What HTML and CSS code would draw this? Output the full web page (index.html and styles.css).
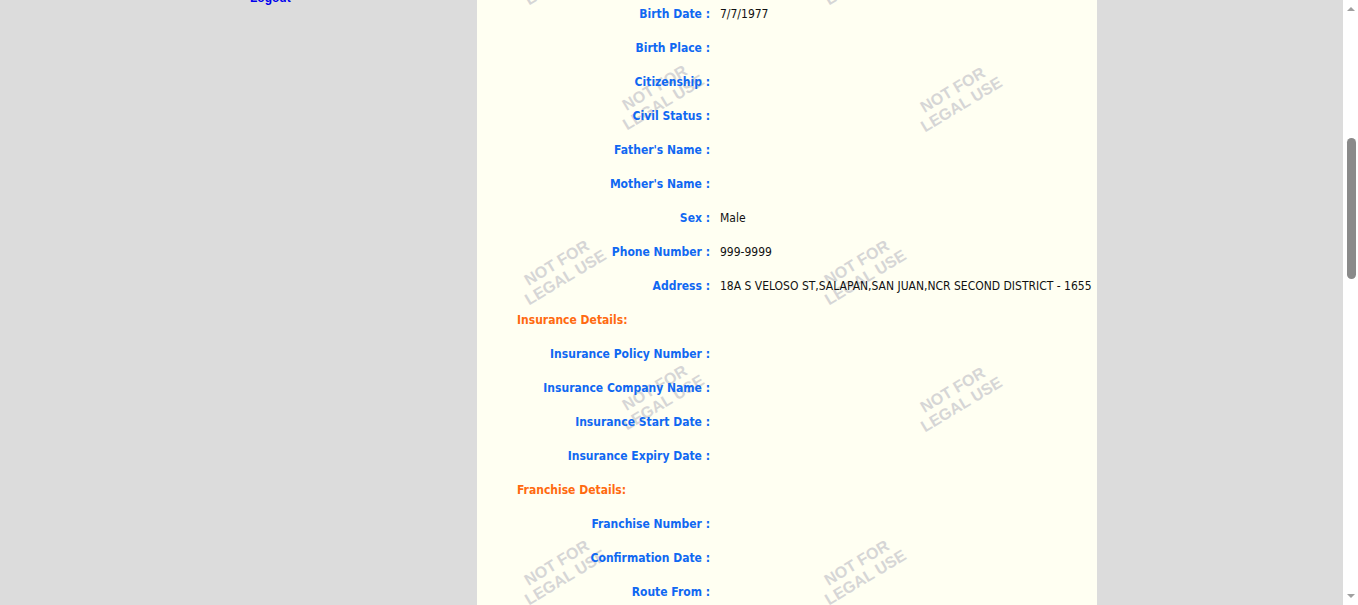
FILE: index.html
```html
<!DOCTYPE html>
<html>
<head>
<meta charset="utf-8">
<title>Details</title>
<link rel="stylesheet" href="styles.css">
</head>
<body>
<div class="page">
  <div class="side">
    <a class="logout" href="#">Logout</a>
  </div>
  <div class="panel">
    <div class="marks">
      <div class="mark" style="left:84px;top:-30px">NOT FOR<br>LEGAL USE</div>
      <div class="mark" style="left:384px;top:-30px">NOT FOR<br>LEGAL USE</div>
      <div class="mark" style="left:182px;top:95px">NOT FOR<br>LEGAL USE</div>
      <div class="mark" style="left:480px;top:97px">NOT FOR<br>LEGAL USE</div>
      <div class="mark" style="left:84px;top:270px">NOT FOR<br>LEGAL USE</div>
      <div class="mark" style="left:384px;top:270px">NOT FOR<br>LEGAL USE</div>
      <div class="mark" style="left:182px;top:395px">NOT FOR<br>LEGAL USE</div>
      <div class="mark" style="left:480px;top:397px">NOT FOR<br>LEGAL USE</div>
      <div class="mark" style="left:84px;top:570px">NOT FOR<br>LEGAL USE</div>
      <div class="mark" style="left:384px;top:570px">NOT FOR<br>LEGAL USE</div>
    </div>
    <div class="details">
      <div class="lbl">Birth Date :</div><div class="val">7/7/1977</div>
      <div class="lbl">Birth Place :</div><div class="val"></div>
      <div class="lbl">Citizenship :</div><div class="val"></div>
      <div class="lbl">Civil Status :</div><div class="val"></div>
      <div class="lbl">Father's Name :</div><div class="val"></div>
      <div class="lbl">Mother's Name :</div><div class="val"></div>
      <div class="lbl">Sex :</div><div class="val">Male</div>
      <div class="lbl">Phone Number :</div><div class="val">999-9999</div>
      <div class="lbl">Address :</div><div class="val">18A S VELOSO ST,SALAPAN,SAN JUAN,NCR SECOND DISTRICT - 1655</div>
      <div class="section">Insurance Details:</div>
      <div class="lbl">Insurance Policy Number :</div><div class="val"></div>
      <div class="lbl">Insurance Company Name :</div><div class="val"></div>
      <div class="lbl">Insurance Start Date :</div><div class="val"></div>
      <div class="lbl">Insurance Expiry Date :</div><div class="val"></div>
      <div class="section">Franchise Details:</div>
      <div class="lbl">Franchise Number :</div><div class="val"></div>
      <div class="lbl">Confirmation Date :</div><div class="val"></div>
      <div class="lbl">Route From :</div><div class="val"></div>
    </div>
  </div>
</div>
<div class="scrollbar">
  <div class="arrow up"></div>
  <div class="thumb"></div>
  <div class="arrow down"></div>
</div>
</body>
</html>
```
FILE: styles.css
```css
html, body {
  margin: 0;
  padding: 0;
  height: 100%;
  overflow: hidden;
}
body {
  background: #dcdcdc;
  font-family: "DejaVu Sans Condensed", "DejaVu Sans", sans-serif;
  font-stretch: condensed;
}
.page {
  display: flex;
  height: 605px;
}
.side {
  width: 477px;
  flex: none;
}
.logout {
  display: block;
  margin: -9px 0 0 250px;
  font-family: "Liberation Sans", Arial, sans-serif;
  font-weight: bold;
  font-size: 12px;
  color: #0000ee;
  text-decoration: none;
}
.panel {
  width: 620px;
  flex: none;
  background: #fffff2;
  position: relative;
  overflow: hidden;
}
.marks {
  position: absolute;
  inset: 0;
  z-index: 0;
}
.mark {
  position: absolute;
  transform: translate(-50%, -50%) rotate(-31deg);
  font-family: "Liberation Sans", Arial, sans-serif;
  font-weight: bold;
  font-size: 16px;
  line-height: 17px;
  color: #d6d6d6;
  text-align: center;
  white-space: nowrap;
}
.details {
  position: relative;
  z-index: 1;
  display: grid;
  grid-template-columns: 233px 1fr;
  grid-auto-rows: 34px;
  column-gap: 10px;
  margin-top: -3px;
  align-items: center;
}
.lbl {
  text-align: right;
  font-weight: bold;
  font-size: 12px;
  color: #1068f2;
  white-space: nowrap;
}
.val {
  font-size: 12px;
  color: #111;
  white-space: nowrap;
}
.section {
  grid-column: 1 / 3;
  padding-left: 40px;
  font-weight: bold;
  font-size: 12px;
  color: #ff6a10;
}
.scrollbar {
  position: fixed;
  top: 0;
  right: 0;
  width: 15px;
  height: 605px;
  background: #ffffff;
}
.thumb {
  position: absolute;
  left: 4px;
  width: 9px;
  top: 138px;
  height: 141px;
  background: #8a8a8a;
  border-radius: 5px;
}
.arrow {
  position: absolute;
  left: 4px;
  width: 0;
  height: 0;
  border-left: 4px solid transparent;
  border-right: 4px solid transparent;
}
.arrow.up {
  top: 7px;
  border-bottom: 4px solid #a0a0a0;
}
.arrow.down {
  bottom: 7px;
  border-top: 4px solid #a0a0a0;
}
```
